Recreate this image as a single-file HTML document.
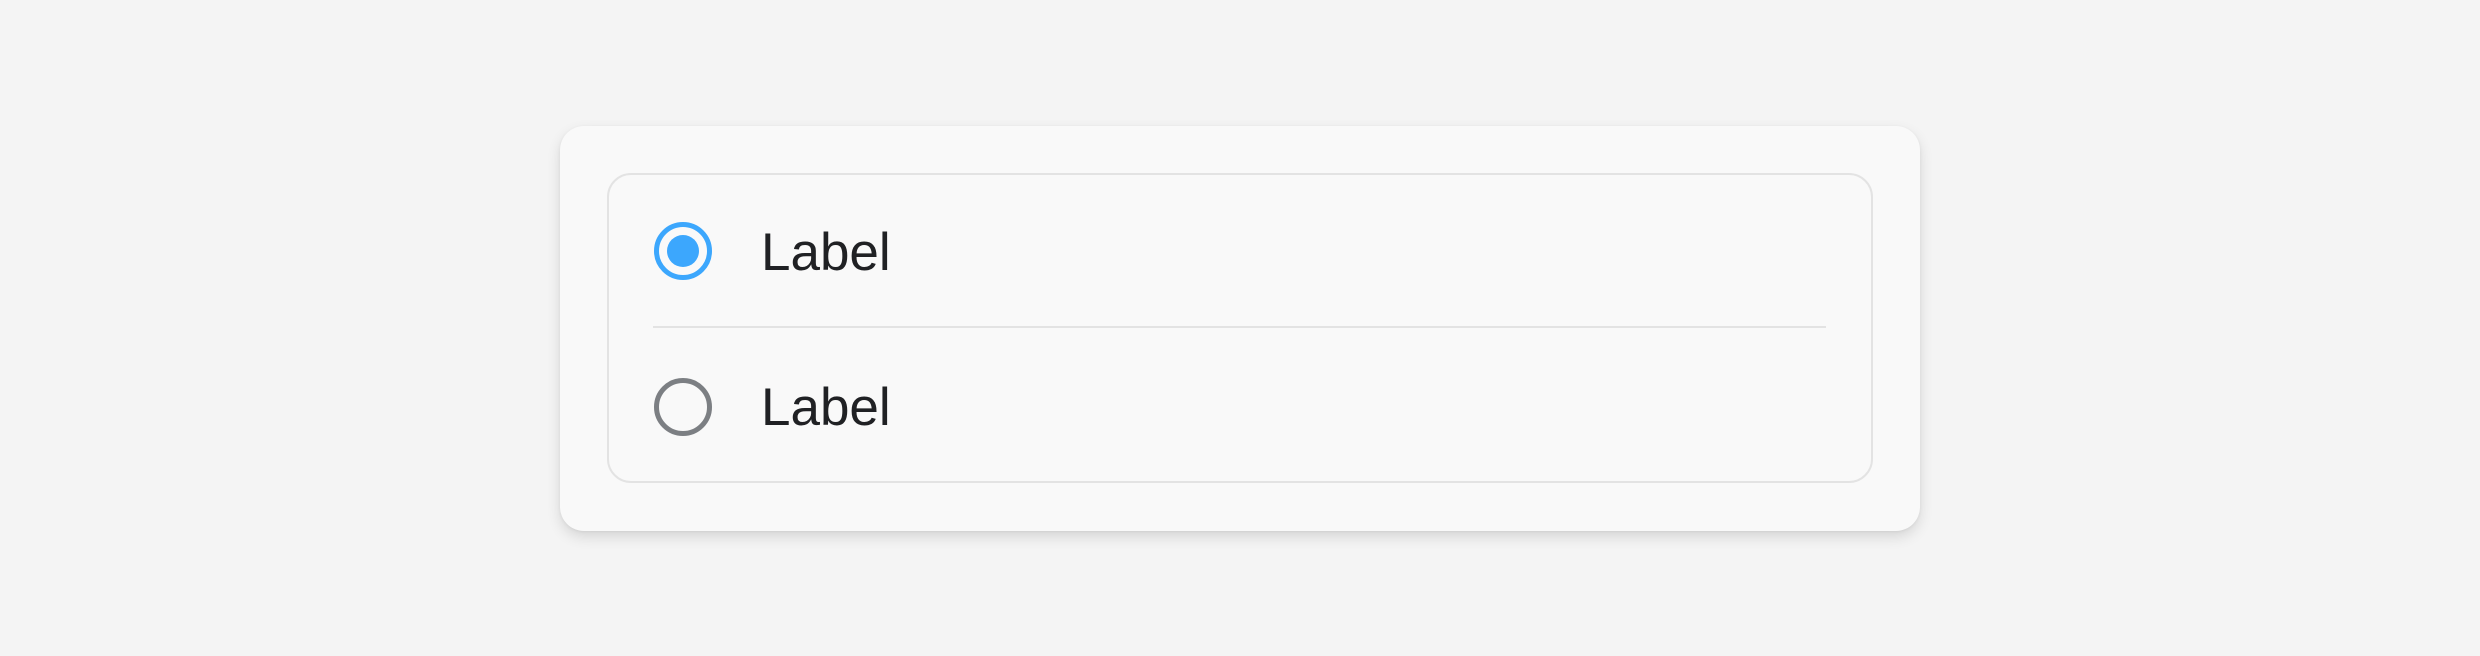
<!DOCTYPE html>
<html><head><meta charset="utf-8"><style>
html,body{margin:0;padding:0;background:#f4f4f4;width:2480px;height:656px;overflow:hidden;font-family:"Liberation Sans",sans-serif;}
.card{position:absolute;left:560px;top:126px;width:1360px;height:405px;background:#f9f9f9;border-radius:24px;box-shadow:0 6px 14px rgba(0,0,0,0.12),0 1px 3px rgba(0,0,0,0.06);}
.box{position:absolute;left:607px;top:173px;width:1262px;height:306px;border:2px solid #e3e3e3;border-radius:24px;background:#f9f9f9;}
.div{position:absolute;left:653px;top:326px;width:1173px;height:2px;background:#e3e3e3;}
.r{position:absolute;width:48px;height:48px;border-radius:50%;}
.t{position:absolute;left:761px;font-size:53px;color:#202124;line-height:1;}
</style></head><body>
<div class="card"></div>
<div class="box"></div>
<div class="div"></div>
<div class="r" style="left:654px;top:222px;border:5px solid #3ca7fd;"></div>
<div style="position:absolute;left:667px;top:235px;width:32px;height:32px;border-radius:50%;background:#3ca7fd;"></div>
<div class="t" style="top:226px;">Label</div>
<div class="r" style="left:654px;top:378px;border:5px solid #7c7f83;"></div>
<div class="t" style="top:381px;">Label</div>
</body></html>
